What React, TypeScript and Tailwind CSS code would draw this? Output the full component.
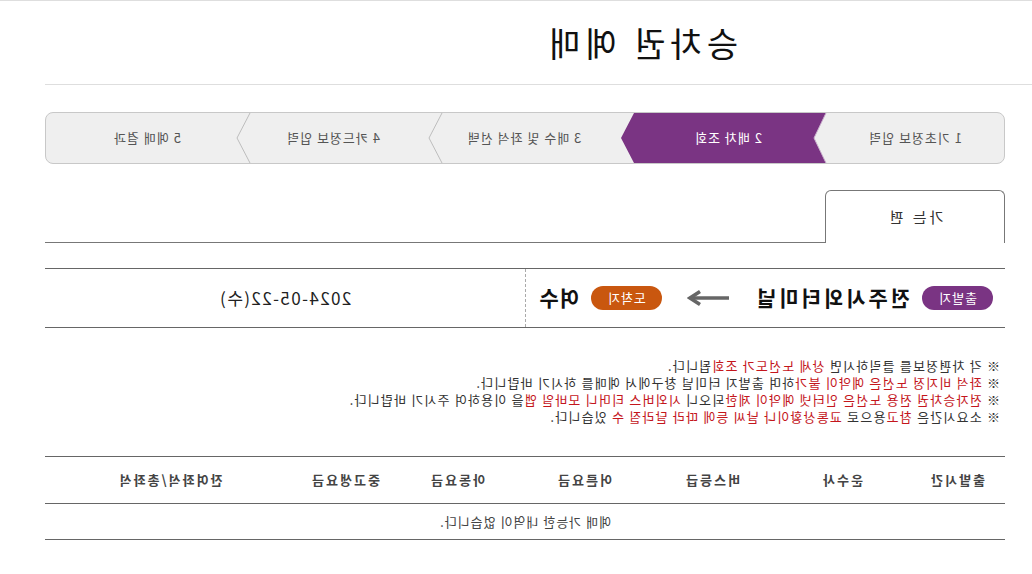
import React from "react";

const font = { fontFamily: '"Noto Sans CJK KR", "Noto Sans", sans-serif' };

const steps = [
  { label: "1 기초정보 입력", w: "w-[178px]" },
  { label: "2 배차 조회", w: "w-[196px]" },
  { label: "3 매수 및 좌석 선택", w: "w-[212px]" },
  { label: "4 카드정보 입력", w: "w-[170px]" },
  { label: "5 예매 결과", w: "w-[202px]" },
];

const columns = [
  { label: "출발시간", w: "w-[96px]" },
  { label: "운수사", w: "w-[134px]" },
  { label: "버스등급", w: "w-[126px]" },
  { label: "어른요금", w: "w-[130px]" },
  { label: "아동요금", w: "w-[124px]" },
  { label: "중고생요금", w: "w-[100px]" },
  { label: "잔여좌석/총좌석", w: "w-[250px]" },
];

const Red = ({ children }: { children: React.ReactNode }) => (
  <span className="text-[#c4161c]">{children}</span>
);

const StepBar = () => (
  <div className="relative h-[52px] rounded-[8px] border border-[#c8c8c8] bg-[#efefef] overflow-hidden">
    {/* chevrons */}
    <svg className="absolute inset-0" width="958" height="50" viewBox="0 0 958 50">
      <polygon points="178,0 370,0 383,25 370,50 178,50 190,25" fill="#7a3483" />
      <polyline points="562,0 575,25 562,50" fill="none" stroke="#bdbdbd" strokeWidth="1" />
      <polyline points="754,0 767,25 754,50" fill="none" stroke="#bdbdbd" strokeWidth="1" />
      <polyline points="178,0 190,25 178,50" fill="none" stroke="#c9b0cc" strokeWidth="1" />
    </svg>
    <div className="relative flex h-full">
      {steps.map((s, i) => (
        <div
          key={s.label}
          className={`${s.w} shrink-0 flex items-center justify-center text-[13px] tracking-[1px] ${
            i === 1 ? "text-white" : "text-[#555]"
          }`}
        >
          {s.label}
        </div>
      ))}
    </div>
  </div>
);

export default function App() {
  return (
    <div className="w-[1032px] min-h-[574px] bg-white -scale-x-100" style={font}>
      <div className="border-t border-[#dedede]" />
      <div className="w-[987px] h-[84px] border-b border-[#dedede] flex items-center pl-[294px]">
        <h1 className="text-[34px] text-[#111] leading-none tracking-[5px]">승차권 예매</h1>
      </div>

      <div className="ml-[27px] w-[960px]">
        <div className="mt-[27px]">
          <StepBar />
        </div>

        {/* tab */}
        <div className="mt-[26px] flex items-end">
          <div className="w-[180px] h-[53px] rounded-t-[6px] border border-b-0 border-[#777] flex items-center justify-center text-[15px] tracking-[3px] text-[#333]">
            가는 편
          </div>
          <div className="flex-1 border-b border-[#777]" />
        </div>

        {/* route */}
        <div className="mt-[25px] h-[60px] border-y border-[#666] flex">
          <div className="w-[480px] flex items-center pl-[12px] border-r border-dashed border-[#aaa]">
            <span className="h-[24px] px-[16px] rounded-full bg-[#7a3483] text-white text-[13px] tracking-[1px] flex items-center">
              출발지
            </span>
            <span className="ml-[12px] text-[21px] font-bold tracking-[3px] text-[#111]">전주시외터미널</span>
            <svg className="ml-[24px]" width="43" height="16" viewBox="0 0 43 16">
              <line x1="1" y1="8" x2="39" y2="8" stroke="#666" strokeWidth="3.5" />
              <polyline points="30,1.5 40,8 30,14.5" fill="none" stroke="#666" strokeWidth="3.5" />
            </svg>
            <span className="ml-[25px] h-[24px] px-[16px] rounded-full bg-[#c9570f] text-white text-[13px] tracking-[1px] flex items-center">
              도착지
            </span>
            <span className="ml-[12px] text-[21px] font-bold tracking-[1px] text-[#111]">여수</span>
          </div>
          <div className="flex-1 flex items-center justify-center text-[17px] tracking-[1.4px] text-[#222]">
            2024-05-22(수)
          </div>
        </div>

        {/* notes */}
        <div className="mt-[29px] pl-[5px] text-[13px] leading-[17px] tracking-[1.2px] text-[#333]">
          <p>
            ※ 각 차편정보를 클릭하시면 <Red>상세 노선도가 조회</Red>됩니다.
          </p>
          <p>
            ※ <Red>좌석 비지정 노선은 예약이 불가</Red>하며 출발지 터미널 창구에서 예매를 하시기 바랍니다.
          </p>
          <p>
            ※ <Red>전자승차권 전용 노선은 인터넷 예약이 제한</Red>되오니 <Red>시외버스 티머니 모바일 앱</Red>을 이용하여 주시기 바랍니다.
          </p>
          <p>
            ※ 소요시간은 <Red>참고</Red>용으로 <Red>교통상황이나 날씨 등에 따라 달라질 수</Red> 있습니다.
          </p>
        </div>

        {/* table */}
        <div className="mt-[31px] border-t border-[#666]">
          <div className="h-[47px] flex items-center border-b border-[#666]">
            {columns.map((c) => (
              <div key={c.label} className={`${c.w} text-center text-[13px] font-bold tracking-[2px] text-[#444]`}>
                {c.label}
              </div>
            ))}
          </div>
          <div className="h-[36px] flex items-center justify-center border-b border-[#666] text-[13px] tracking-[1px] text-[#444]">
            예매 가능한 내역이 없습니다.
          </div>
        </div>
      </div>
    </div>
  );
}
